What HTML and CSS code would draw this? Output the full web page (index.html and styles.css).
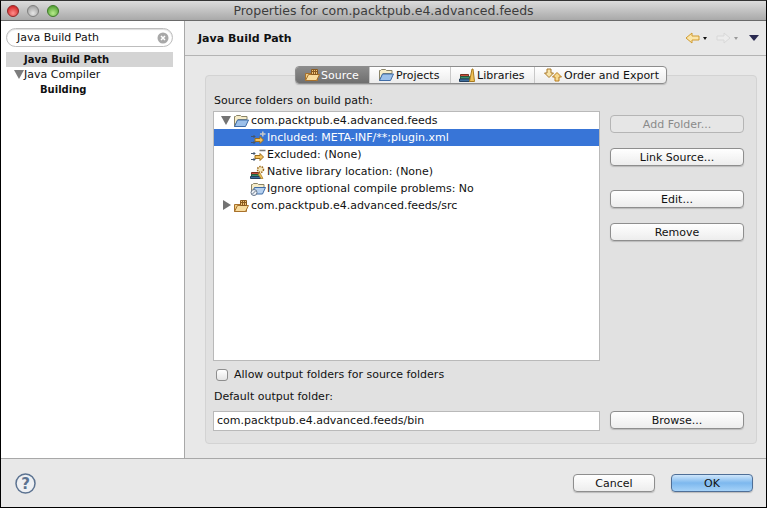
FILE: index.html
```html
<!DOCTYPE html>
<html lang="en">
<head>
    <meta charset="UTF-8">
    <title>Properties for com.packtpub.e4.advanced.feeds</title>
    <link rel="stylesheet" href="styles.css">
</head>
<body>

    <svg class="defs" width="0" height="0">
        <defs>
            <radialGradient id="red" cx="50%" cy="70%" r="60%"><stop offset="0" stop-color="#ff8f8c"/><stop offset="1" stop-color="#d42a2a"/></radialGradient>
            <radialGradient id="grey" cx="50%" cy="70%" r="60%"><stop offset="0" stop-color="#e6e6e6"/><stop offset="1" stop-color="#a5a5a5"/></radialGradient>
            <radialGradient id="green" cx="50%" cy="70%" r="60%"><stop offset="0" stop-color="#b9ec8c"/><stop offset="1" stop-color="#5aa63a"/></radialGradient>
            <symbol id="folder-blue" viewBox="0 0 16 14">
                <path d="M1.500 12.500V2.500h1l1-1h4l1 1h5.500v3H5z" fill="#f6ecc8" stroke="#8a8468"/>
                <path d="M1.500 12.500l3-6.500h11l-3 6.500z" fill="#9cc0ea" stroke="#3f6ca6"/>
            </symbol>
            <symbol id="folder-src" viewBox="0 0 16 14">
                <path d="M1.500 12.500V5.500h12v7z" fill="#f0cf87" stroke="#a8712b"/>
                <path d="M1.500 12.500l3-6h11l-3 6z" fill="#f8dc9f" stroke="#a8712b"/>
                <path d="M7.500 1.500h6v5h-6zM9.500 1v5.500M11.500 1v5.500M7 3.500h7" fill="#f0c47a" stroke="#8a5a20"/>
            </symbol>
            <symbol id="books" viewBox="0 0 16 14">
                <path d="M1.500 6.500h8v2h-8z" fill="#c9503c" stroke="#7a3020"/>
                <path d="M1.500 8.500h9v2.500h-9z" fill="#3b8f6a" stroke="#24583f"/>
                <path d="M.5 11h10v2.500H.5z" fill="#3d6d9c" stroke="#233f5e"/>
                <path d="M10.500 13.500L13 1h1l1.500 12.500z" fill="#eec25a" stroke="#a87a1e"/>
            </symbol>
            <symbol id="updown" viewBox="0 0 18 14">
                <path d="M3 1h4v4h2.500L5 9.500.5 5H3z" fill="#f7e3a8" stroke="#a8792a"/>
                <path d="M11 13V9H8.500L13 4.500 17.500 9H15v4z" fill="#f7d98e" stroke="#b87d1e"/>
            </symbol>
            <symbol id="included" viewBox="0 0 16 14">
                <path d="M1 5.500h4M3.500 4l1.500 1.500L3.500 7M1 11.500h4M3.500 10l1.500 1.500L3.500 13" stroke="#44566e" fill="none"/>
                <path d="M5 7.500h5V5.500l3.500 3.500L10 12.500V10.500H5z" fill="#f4c25e" stroke="#9c6e1c"/>
                <path d="M10 3h5.500M12.800.5v5" stroke="#c9c9c9" stroke-width="1.500" fill="none"/>
            </symbol>
            <symbol id="excluded" viewBox="0 0 16 14">
                <path d="M1 5.500h4M3.500 4l1.500 1.500L3.500 7M1 11.500h4M3.500 10l1.500 1.500L3.500 13" stroke="#44566e" fill="none"/>
                <path d="M5 7.500h5V5.500l3.500 3.500L10 12.500V10.500H5z" fill="#f4c25e" stroke="#9c6e1c"/>
                <path d="M9.500 2.500h6" stroke="#777" stroke-width="1.500" fill="none"/>
            </symbol>
            <symbol id="native" viewBox="0 0 16 14">
                <path d="M1.500 7.500h7v2h-7z" fill="#c9503c" stroke="#7a3020"/>
                <path d="M1.500 9.500h8v2h-8z" fill="#3b8f6a" stroke="#24583f"/>
                <path d="M.5 11.500h10v2H.5z" fill="#3d6d9c" stroke="#233f5e"/>
                <path d="M8 9l3 4.500h2L10 8z" fill="#eec25a" stroke="#a87a1e" stroke-width=".7"/>
                <circle cx="10.500" cy="4.500" r="3" fill="#f6e7bd" stroke="#9c6a20" stroke-width="1.500" stroke-dasharray="1.500 1"/>
            </symbol>
            <symbol id="ignore" viewBox="0 0 16 14">
                <path d="M1.500 10V2.500h1l1-1h4l1 1h5.500v3H5z" fill="#f6ecc8" stroke="#8a8468"/>
                <path d="M3 9l1.500-3.500h11l-3 6.500H6z" fill="#b4cfee" stroke="#3f6ca6"/>
                <circle cx="4" cy="10.500" r="3" fill="#eef1f5" stroke="#65758a"/>
                <path d="M2.300 12.200l3.400-3.400" stroke="#65758a"/>
            </symbol>
        </defs>
    </svg>

    <div class="window">
        <div class="titlebar">
            <div class="lights">
                <svg width="12" height="12"><circle cx="6" cy="6" r="5.500" fill="url(#red)" stroke="#8e2a2a"/></svg>
                <svg width="12" height="12"><circle cx="6" cy="6" r="5.500" fill="url(#grey)" stroke="#7f7f7f"/></svg>
                <svg width="12" height="12"><circle cx="6" cy="6" r="5.500" fill="url(#green)" stroke="#3f7a2a"/></svg>
            </div>
            <div class="title">Properties for com.packtpub.e4.advanced.feeds</div>
        </div>

        <div class="body">
            <div class="sidebar">
                <div class="search">
                    <span>Java Build Path</span>
                    <svg width="12" height="12" viewBox="0 0 12 12"><circle cx="6" cy="6" r="5.500" fill="#a8a8a8"/><path d="M4 4l4 4M8 4l-4 4" stroke="#fff" stroke-width="1.500"/></svg>
                </div>
                <div class="nav-row nav-selected nav-bold">Java Build Path</div>
                <div class="nav-row"><i class="nav-arrow"></i>Java Compiler</div>
                <div class="nav-row nav-child nav-bold">Building</div>
            </div>

            <div class="main">
                <div class="main-head">
                    <h1>Java Build Path</h1>
                    <div class="nav-tools">
                        <svg width="15" height="12" viewBox="0 0 15 12"><path d="M1 6l6-5v3h7v4H7v3z" fill="#fbe6ab" stroke="#d09a2e"/></svg>
                        <i class="drop"></i>
                        <svg class="fwd" width="15" height="12" viewBox="0 0 15 12"><path d="M14 6L8 1v3H1v4h7v3z" fill="#ececec" stroke="#d8d8d8"/></svg>
                        <i class="drop drop-off"></i>
                        <i class="menu-drop"></i>
                    </div>
                </div>

                <div class="panel-wrap">
                    <div class="tabs">
                        <div class="tab tab-on"><svg width="16" height="14"><use href="#folder-src"/></svg>Source</div>
                        <div class="tab tab-projects"><svg width="16" height="14"><use href="#folder-blue"/></svg>Projects</div>
                        <div class="tab"><svg width="16" height="14"><use href="#books"/></svg>Libraries</div>
                        <div class="tab"><svg width="18" height="14"><use href="#updown"/></svg>Order and Export</div>
                    </div>
                    <div class="panel">
                        <div class="label">Source folders on build path:</div>
                        <div class="split">
                            <div class="tree">
                                <div class="row"><i class="arrow-down"></i><svg width="16" height="14"><use href="#folder-blue"/></svg>com.packtpub.e4.advanced.feeds</div>
                                <div class="row row-sub row-on"><svg width="16" height="14"><use href="#included"/></svg>Included: META-INF/**;plugin.xml</div>
                                <div class="row row-sub"><svg width="16" height="14"><use href="#excluded"/></svg>Excluded: (None)</div>
                                <div class="row row-sub"><svg width="16" height="14"><use href="#native"/></svg>Native library location: (None)</div>
                                <div class="row row-sub"><svg width="16" height="14"><use href="#ignore"/></svg>Ignore optional compile problems: No</div>
                                <div class="row"><i class="arrow-right"></i><svg width="16" height="14"><use href="#folder-src"/></svg>com.packtpub.e4.advanced.feeds/src</div>
                            </div>
                            <div class="side-btns">
                                <button class="btn btn-off">Add Folder...</button>
                                <button class="btn">Link Source...</button>
                                <button class="btn gap-big">Edit...</button>
                                <button class="btn">Remove</button>
                            </div>
                        </div>
                        <div class="check-row"><i class="check"></i>Allow output folders for source folders</div>
                        <div class="label out-label">Default output folder:</div>
                        <div class="out-row">
                            <div class="out-input">com.packtpub.e4.advanced.feeds/bin</div>
                            <button class="btn">Browse...</button>
                        </div>
                    </div>
                </div>
            </div>
        </div>

        <div class="footer">
            <svg width="21" height="21" viewBox="0 0 21 21"><circle cx="10.500" cy="10.500" r="9.500" fill="#eef0f3" stroke="#5c7391" stroke-width="1.500"/><text x="10.500" y="15.500" text-anchor="middle" class="help-mark">?</text></svg>
            <div class="footer-btns">
                <button class="btn btn-wide">Cancel</button>
                <button class="btn btn-wide btn-ok">OK</button>
            </div>
        </div>
    </div>

</body>
</html>
```

FILE: styles.css
```css
* {
    box-sizing: border-box;
}

html, body {
    margin: 0;
    height: 100%;
    overflow: hidden;
}

body {
    font-family: "DejaVu Sans", sans-serif;
    font-size: 11px;
    color: #111;
    background: #e8e8e8;
}

.defs {
    position: absolute;
}

.window {
    height: 508px;
    display: flex;
    flex-direction: column;
    border: 1px solid #000;
    border-top-color: #333;
}

.titlebar {
    height: 20px;
    flex: none;
    display: flex;
    align-items: center;
    background: linear-gradient(#dcdcdc, #a9a9a9);
    border-bottom: 1px solid #6a6a6a;
}

.lights {
    display: flex;
    gap: 8px;
    padding-left: 6px;
    width: 75px;
    flex: none;
}

.lights svg {
    display: block;
}

.title {
    flex: 1;
    text-align: center;
    font-size: 12.500px;
    color: #3c3c3c;
    padding-right: 75px;
}

.body {
    flex: 1;
    display: flex;
    min-height: 0;
}

.sidebar {
    width: 184px;
    flex: none;
    background: #fff;
    border-right: 1px solid #a8a8a8;
    padding: 7px 11px 0 5px;
}

.search {
    height: 19px;
    display: flex;
    align-items: center;
    justify-content: space-between;
    border: 1px solid #bdbdbd;
    border-radius: 10px;
    padding: 0 3px 0 10px;
    margin-bottom: 5px;
    box-shadow: inset 0 1px 1px #ddd;
}

.nav-row {
    height: 15px;
    line-height: 15px;
    white-space: nowrap;
    padding-left: 18px;
    position: relative;
}

.nav-bold {
    font-size: 10px;
    font-weight: bold;
}

.nav-selected {
    background: #d4d4d4;
}

.nav-child {
    padding-left: 34px;
}

.nav-arrow {
    position: absolute;
    left: 8px;
    top: 3px;
    border-left: 5px solid transparent;
    border-right: 5px solid transparent;
    border-top: 9px solid #7d7d7d;
}

.main {
    flex: 1;
    min-width: 0;
    display: flex;
    flex-direction: column;
}

.main-head {
    height: 35px;
    flex: none;
    display: flex;
    align-items: center;
    justify-content: space-between;
    padding: 0 7px 0 13px;
    border-bottom: 1px solid #b4b4b4;
}

.main-head h1 {
    margin: 0;
    font-size: 11px;
    font-weight: bold;
}

.nav-tools {
    display: flex;
    align-items: center;
    gap: 3px;
}

.drop {
    border-left: 2.500px solid transparent;
    border-right: 2.500px solid transparent;
    border-top: 3px solid #111;
}

.drop-off {
    border-top-color: #999;
}

.fwd {
    margin-left: 6px;
}

.menu-drop {
    margin-left: 8px;
    border-left: 5px solid transparent;
    border-right: 5px solid transparent;
    border-top: 6px solid #2a2a50;
}

.panel-wrap {
    padding: 10px 9px 0 20px;
}

.tabs {
    width: 372px;
    height: 18px;
    margin: 0 0 -9px 90px;
    position: relative;
    display: flex;
    background: linear-gradient(#fff, #ececec);
    border: 1px solid #8d8d8d;
    border-radius: 4px;
    box-shadow: 0 1px 1px #bbb;
}

.tab {
    display: flex;
    align-items: center;
    gap: 2px;
    padding-left: 8px;
    width: 84px;
    white-space: nowrap;
    border-right: 1px solid #c8c8c8;
}

.tab-projects {
    width: 81px;
}

.tab:last-child {
    flex: 1;
    border-right: none;
    padding-left: 9px;
}

.tab-on {
    width: 74px;
    gap: 1px;
    color: #fff;
    background: linear-gradient(#8c8c8c, #6f6f6f);
    border-radius: 3px 0 0 3px;
}

.panel {
    height: 369px;
    background: #e1e1e1;
    border: 1px solid #d3d3d3;
    border-radius: 4px;
    padding: 17px 13px 0 7px;
}

.label {
    height: 15px;
    line-height: 15px;
    margin-bottom: 3px;
    padding-left: 1px;
}

.split {
    display: grid;
    grid-template-columns: 387px 134px;
    column-gap: 10px;
    height: 250px;
}

.tree {
    background: #fff;
    border: 1px solid #b9b9b9;
}

.row {
    height: 17px;
    display: flex;
    align-items: center;
    gap: 2px;
    padding-left: 19px;
    position: relative;
    white-space: nowrap;
}

.row-sub {
    gap: 1px;
    padding-left: 36px;
}

.row-on {
    background: #3875d7;
    color: #fff;
}

.arrow-down {
    position: absolute;
    left: 7px;
    top: 4px;
    border-left: 5px solid transparent;
    border-right: 5px solid transparent;
    border-top: 9px solid #737373;
}

.arrow-right {
    position: absolute;
    left: 9px;
    top: 3px;
    border-top: 5px solid transparent;
    border-bottom: 5px solid transparent;
    border-left: 8px solid #737373;
}

.side-btns {
    display: flex;
    flex-direction: column;
    padding-top: 4px;
    gap: 15px;
}

.btn {
    height: 18px;
    padding: 0;
    font: inherit;
    color: #111;
    background: linear-gradient(#fff, #ededed);
    border: 1px solid #8e8e8e;
    border-radius: 4px;
    box-shadow: 0 1px 1px #bbb;
}

.btn-off {
    color: #8a8a8a;
    background: #e6e6e6;
    border-color: #b5b5b5;
    box-shadow: none;
}

.gap-big {
    margin-top: 9px;
}

.check-row {
    display: flex;
    align-items: center;
    gap: 6px;
    height: 15px;
    margin-top: 6px;
    padding-left: 3px;
}

.check {
    width: 12px;
    height: 12px;
    background: linear-gradient(#fff, #e4e4e4);
    border: 1px solid #8e8e8e;
    border-radius: 3px;
}

.out-label {
    margin: 7px 0 0 0;
    height: 16px;
}

.out-row {
    display: grid;
    grid-template-columns: 387px 134px;
    column-gap: 10px;
    align-items: start;
    margin-top: 6px;
}

.out-input {
    height: 20px;
    line-height: 18px;
    padding-left: 3px;
    background: #fff;
    border: 1px solid #b9b9b9;
}

.footer {
    height: 49px;
    flex: none;
    display: flex;
    align-items: center;
    justify-content: space-between;
    padding: 0 13px 0 14px;
    border-top: 1px solid #a8a8a8;
    background: #e8e8e8;
}

.help-mark {
    font: bold 15px "DejaVu Sans", sans-serif;
    fill: #5c7391;
}

.footer-btns {
    display: flex;
    gap: 16px;
}

.btn-wide {
    width: 82px;
}

.btn-ok {
    background: linear-gradient(#cfe6fb, #7db8ee 50%, #a5d2f8);
    border-color: #4f6f97;
}
```
